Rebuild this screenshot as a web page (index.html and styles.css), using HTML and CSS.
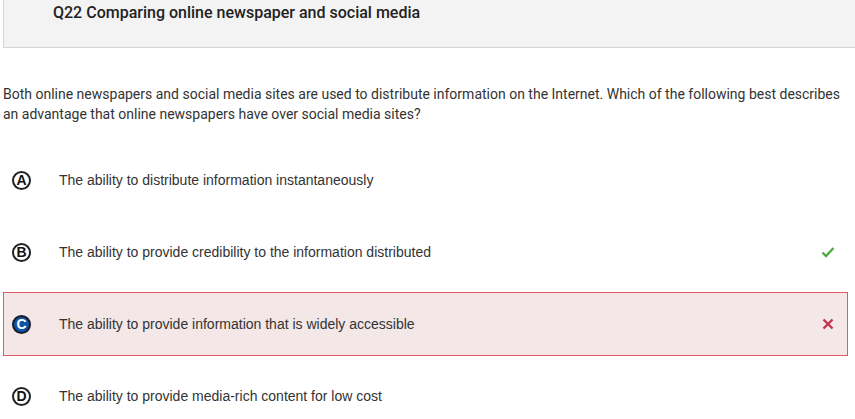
FILE: index.html
```html
<!DOCTYPE html>
<html>
<head>
<meta charset="utf-8">
<link rel="stylesheet" href="styles.css">
</head>
<body>
<div class="header">
  <div class="title">Q22 Comparing online newspaper and social media</div>
</div>
<p class="question">Both online newspapers and social media sites are used to distribute information on the Internet. Which of the following best describes an advantage that online newspapers have over social media sites?</p>
<div class="options">
  <div class="option">
    <span class="letter">A</span>
    <span class="text">The ability to distribute information instantaneously</span>
  </div>
  <div class="option">
    <span class="letter">B</span>
    <span class="text">The ability to provide credibility to the information distributed</span>
    <svg class="mark" width="14" height="12" viewBox="0 0 14 12"><path d="M1.5 6.5 L5 10 L12.5 2" fill="none" stroke="#52a845" stroke-width="2.4"/></svg>
  </div>
  <div class="option wrong">
    <span class="letter selected">C</span>
    <span class="text">The ability to provide information that is widely accessible</span>
    <svg class="mark" width="14" height="12" viewBox="0 0 14 12"><path d="M2.5 1.5 L11.5 10.5 M11.5 1.5 L2.5 10.5" fill="none" stroke="#c8324e" stroke-width="2.4"/></svg>
  </div>
  <div class="option">
    <span class="letter">D</span>
    <span class="text">The ability to provide media-rich content for low cost</span>
  </div>
</div>
</body>
</html>
```
FILE: styles.css
```css
html, body {
  margin: 0;
  padding: 0;
  background: #ffffff;
  overflow: hidden;
}
body {
  width: 855px;
  height: 419px;
}
.header {
  margin-left: 3px;
  width: 870px;
  height: 47px;
  background: #f3f3f3;
  border-left: 1px solid #d4d4d8;
  border-bottom: 1px solid #d4d4d8;
  box-sizing: content-box;
}
.title {
  padding: 2px 0 0 49px;
  font-family: Roboto, "Liberation Sans", sans-serif;
  font-weight: 500;
  font-size: 16px;
  line-height: 22px;
  color: #222;
}
.question {
  margin: 36px 10px 0 3px;
  font-family: Roboto, "Liberation Sans", sans-serif;
  font-size: 14px;
  line-height: 20px;
  color: #333;
}
.options {
  margin: 24px 7px 0 3px;
  display: flex;
  flex-direction: column;
  gap: 8px;
}
.option {
  height: 62px;
  border: 1px solid transparent;
  display: flex;
  align-items: center;
  padding: 0 12px 0 8px;
}
.option.wrong {
  background: #f3e7e7;
  border-color: #e25a6c;
}
.letter {
  width: 15px;
  height: 15px;
  border: 2px solid #222;
  border-radius: 50%;
  display: flex;
  align-items: center;
  justify-content: center;
  font-family: "Liberation Sans", Arial, sans-serif;
  font-weight: bold;
  font-size: 14px;
  line-height: 1;
  color: #111;
  flex: none;
}
.letter.selected {
  background: #0d55a6;
  color: #fff;
  border-color: #1a1a2a;
}
.text {
  margin-left: 28px;
  font-family: "Liberation Sans", Arial, sans-serif;
  font-size: 14px;
  color: #333;
  flex: 1;
}
.mark {
  flex: none;
}
```
